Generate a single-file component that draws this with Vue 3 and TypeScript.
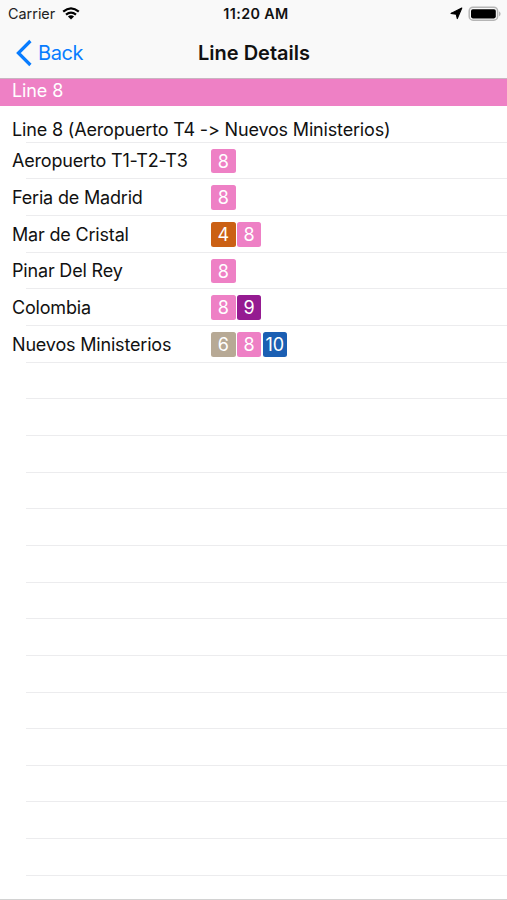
<script setup lang="ts">
interface Station {
  name: string
  lines: number[]
}

const stations: Station[] = [
  { name: 'Aeropuerto T1-T2-T3', lines: [8] },
  { name: 'Feria de Madrid', lines: [8] },
  { name: 'Mar de Cristal', lines: [4, 8] },
  { name: 'Pinar Del Rey', lines: [8] },
  { name: 'Colombia', lines: [8, 9] },
  { name: 'Nuevos Ministerios', lines: [6, 8, 10] },
]

const emptyRows = 14
</script>

<template>
  <div class="screen">
    <header>
      <div class="status">
        <div class="side">
          <span class="carrier">Carrier</span>
          <svg class="wifi" width="18" height="13" viewBox="0 0 18 13">
            <path d="M1.2 4.7Q9-2 16.8 4.7M4 7.7Q9 3.5 14 7.7" fill="none" stroke="#000" stroke-width="2.2" />
            <path d="M5.9 9.5Q9 7 12.1 9.5L9 12.6Z" />
          </svg>
        </div>
        <span class="time">11:20 AM</span>
        <div class="side right">
          <svg class="location" width="13" height="13" viewBox="0 0 13 13">
            <path d="M11.8 1 7.3 11.6 6.2 7.2 1 6.4Z" stroke="#000" stroke-width="1.1" stroke-linejoin="round" />
          </svg>
          <svg class="battery" width="34" height="16" viewBox="0 0 34 16">
            <rect x="1.2" y="1.2" width="28.4" height="13" rx="3.8" fill="#f9f9f9" stroke="#b5b5b5" stroke-width="1.5" />
            <rect x="3" y="3.2" width="24.8" height="9.2" rx="1.8" />
            <path d="M31.2 5.2Q33.8 7.8 31.2 10.4Z" fill="#a5a5a5" />
          </svg>
        </div>
      </div>
      <nav>
        <a class="back">
          <svg width="17" height="28" viewBox="0 0 17 28">
            <path d="M14.4 2 2.4 14 14.4 26" fill="none" stroke="#087cff" stroke-width="3.2" />
          </svg>
          <span>Back</span>
        </a>
        <h1>Line Details</h1>
      </nav>
    </header>
    <h2>Line 8</h2>
    <main>
      <div class="row route"><span>Line 8 (Aeropuerto T4 -&gt; Nuevos Ministerios)</span></div>
      <div v-for="station in stations" :key="station.name" class="row">
        <span class="name">{{ station.name }}</span>
        <span v-for="line in station.lines" :key="line" class="badge" :class="`line-${line}`">{{ line }}</span>
      </div>
      <div v-for="n in emptyRows" :key="n" class="row"></div>
    </main>
  </div>
</template>

<style>
body {
  margin: 0;
  background: #fff;
}
</style>

<style scoped>
.screen {
  box-sizing: border-box;
  height: 900px;
  overflow: hidden;
  border-bottom: 1px solid #d2d2d2;
  background: #fff;
  color: #111;
  font-family: Inter, "Liberation Sans", sans-serif;
  font-size: 18px;
  font-feature-settings: "calt" 0;
}
header {
  box-sizing: border-box;
  height: 79px;
  background: #f9f9f9;
  border-bottom: 1px solid #c9b5c1;
}
.status {
  display: grid;
  grid-template-columns: 1fr auto 1fr;
  align-items: center;
  height: 27px;
  padding: 0 5px 0 8px;
}
.side {
  display: flex;
  align-items: center;
}
.right {
  justify-content: flex-end;
}
.carrier {
  font-size: 14.4px;
  color: #222;
}
.wifi {
  margin-left: 7px;
}
.time {
  padding-left: 2px;
  font-size: 14.3px;
  font-weight: 600;
  letter-spacing: 0.4px;
}
.location {
  margin-right: 5px;
}
nav {
  display: grid;
  grid-template-columns: 1fr auto 1fr;
  align-items: center;
  height: 51px;
}
.back {
  display: flex;
  align-items: center;
  gap: 5px;
  padding-left: 16px;
  color: #087cff;
  font-size: 20px;
  letter-spacing: -0.4px;
}
h1 {
  margin: 0;
  padding-left: 1px;
  font-size: 20px;
  font-weight: 600;
}
h2 {
  height: 27px;
  margin: 0;
  padding-left: 12px;
  background: #ee80c5;
  color: #fff;
  font-size: 18px;
  font-weight: 400;
  letter-spacing: -0.1px;
  line-height: 23px;
}
.row {
  box-sizing: border-box;
  display: flex;
  align-items: center;
  height: 36.667px;
  padding-left: 12px;
  background: linear-gradient(#ececee, #ececee) 26px 100% / 100% 1px no-repeat;
  white-space: nowrap;
}
.route {
  padding-top: 10px;
  letter-spacing: -0.17px;
}
.name {
  width: 199px;
  letter-spacing: -0.18px;
}
.badge {
  width: 24.6px;
  height: 24.6px;
  margin-right: 1.2px;
  border-radius: 2.5px;
  color: #fff;
  line-height: 25px;
  text-align: center;
}
.line-4 { background: #cb6014; }
.line-6 { background: #b7a995; }
.line-8 { background: #ee80c5; }
.line-9 { background: #951b91; }
.line-10 { background: #1b5fb3; }
</style>
